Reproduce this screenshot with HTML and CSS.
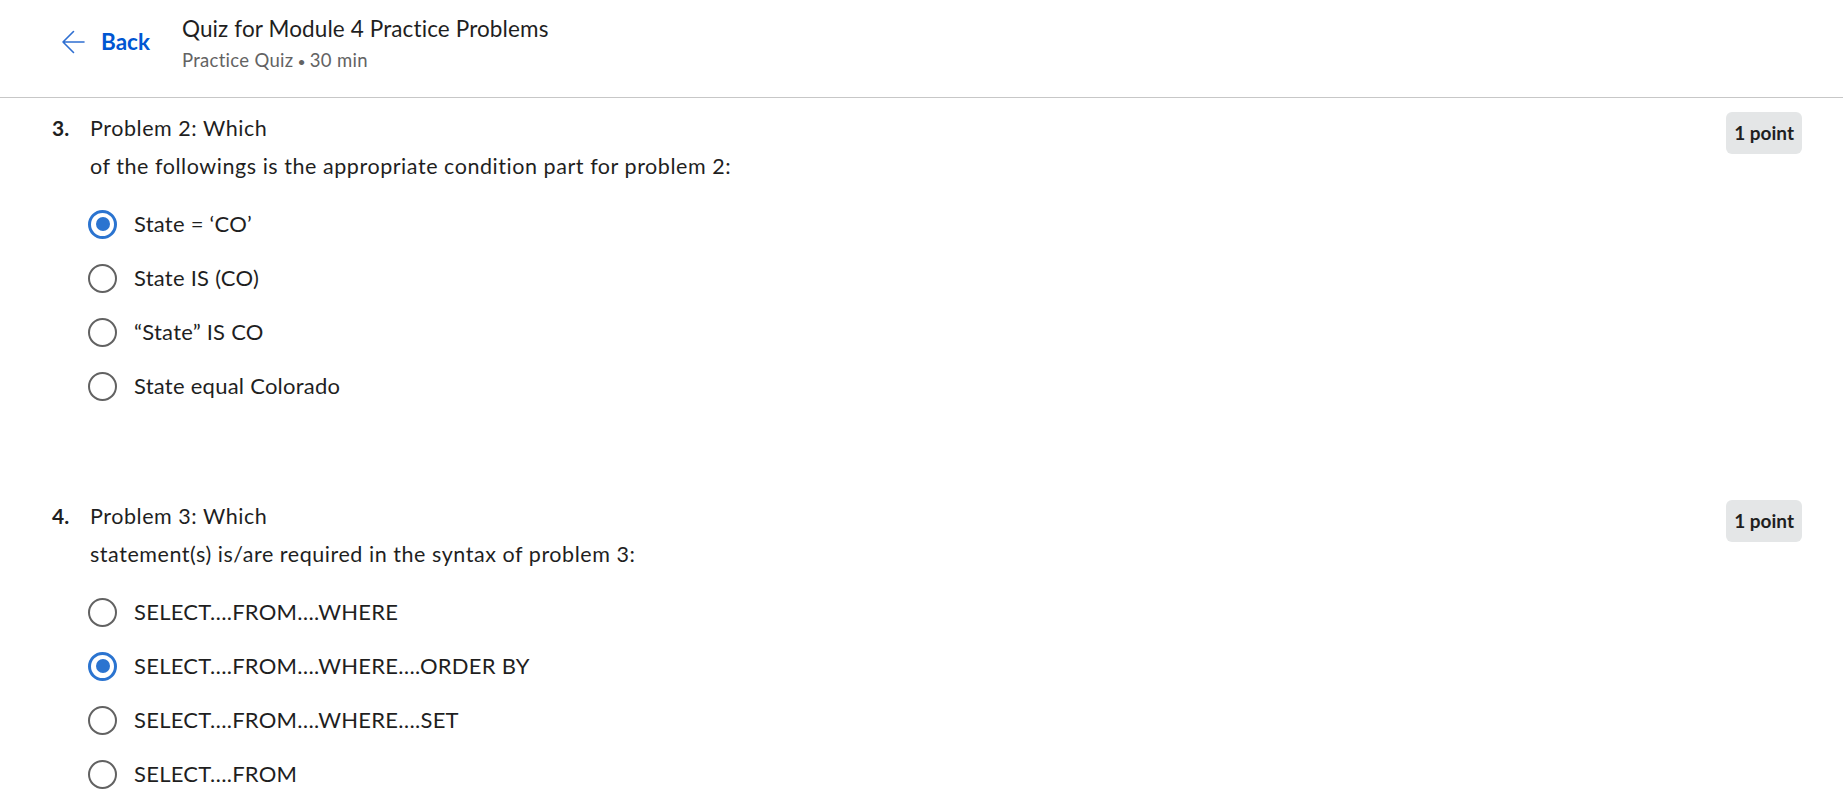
FILE: index.html
```html
<!DOCTYPE html>
<html lang="en">
<head>
<meta charset="utf-8">
<title>Quiz for Module 4 Practice Problems</title>
<link rel="stylesheet" href="styles.css">
</head>
<body>
<header class="topbar">
  <a class="back" href="#">
    <svg class="back-icon" viewBox="0 0 24 26" width="24" height="26" aria-hidden="true">
      <path d="M23 13H2M12.5 2.5L2 13l10.5 10.5" fill="none" stroke="#2f6fd1" stroke-width="1.6" stroke-linecap="round" stroke-linejoin="round"/>
    </svg>
    <span>Back</span>
  </a>
  <div class="titles">
    <div class="title">Quiz for Module 4 Practice Problems</div>
    <div class="subtitle">Practice Quiz<span class="dot">•</span>30 min</div>
  </div>
</header>

<main class="content">
  <section class="question">
    <div class="qnum">3.</div>
    <div class="qbody">
      <div class="prompt">
        <div class="line">Problem 2: Which</div>
        <div class="line">of the followings is the appropriate condition part for problem 2:</div>
      </div>
      <div class="options">
        <div class="option"><span class="radio checked"></span><span class="label">State = ‘CO’</span></div>
        <div class="option"><span class="radio"></span><span class="label">State IS (CO)</span></div>
        <div class="option"><span class="radio"></span><span class="label">“State” IS CO</span></div>
        <div class="option"><span class="radio"></span><span class="label">State equal Colorado</span></div>
      </div>
    </div>
    <div class="badge">1 point</div>
  </section>

  <section class="question">
    <div class="qnum">4.</div>
    <div class="qbody">
      <div class="prompt">
        <div class="line">Problem 3: Which</div>
        <div class="line">statement(s) is/are required in the syntax of problem 3:</div>
      </div>
      <div class="options">
        <div class="option"><span class="radio"></span><span class="label">SELECT….FROM….WHERE</span></div>
        <div class="option"><span class="radio checked"></span><span class="label">SELECT….FROM….WHERE….ORDER BY</span></div>
        <div class="option"><span class="radio"></span><span class="label">SELECT….FROM….WHERE….SET</span></div>
        <div class="option"><span class="radio"></span><span class="label">SELECT….FROM</span></div>
      </div>
    </div>
    <div class="badge">1 point</div>
  </section>
</main>
</body>
</html>
```

FILE: styles.css
```css
* { box-sizing: border-box; }

html, body {
  margin: 0;
  padding: 0;
  background: #ffffff;
}

body {
  font-family: "Lato", "Liberation Sans", sans-serif;
  color: #1f1f1f;
  overflow: hidden;
}

.topbar {
  display: flex;
  align-items: flex-start;
  height: 98px;
  border-bottom: 1px solid #c7c7c7;
  padding-left: 61px;
}

.back {
  display: flex;
  align-items: center;
  gap: 16px;
  margin-top: 29px;
  text-decoration: none;
  color: #0056d2;
  font-weight: 700;
  font-size: 22.5px;
  line-height: 26px;
}

.back-icon { display: block; }

.titles {
  margin-left: 32px;
  padding-top: 14px;
}

.title {
  font-size: 22.5px;
  line-height: 30px;
  letter-spacing: 0.12px;
  color: #1f1f1f;
}

.subtitle {
  margin-top: 2px;
  font-size: 18.5px;
  line-height: 28px;
  letter-spacing: 0.3px;
  color: #636363;
}

.subtitle .dot {
  margin: 0 4px;
  font-size: 14px;
}

.content {
  padding: 11px 41px 0 52px;
}

.question {
  display: flex;
  align-items: flex-start;
  margin-bottom: 84px;
}

.qnum {
  width: 38px;
  flex: none;
  font-weight: 700;
  font-size: 21px;
  line-height: 38px;
}

.qbody {
  flex: 1;
}

.prompt .line {
  font-size: 21.5px;
  line-height: 38px;
  letter-spacing: 0.55px;
}

.options {
  margin-top: 12px;
}

.option {
  display: flex;
  align-items: center;
  height: 54px;
  margin-left: -2px;
}

.radio {
  flex: none;
  width: 29px;
  height: 29px;
  border-radius: 50%;
  border: 2.5px solid #626262;
  display: flex;
  align-items: center;
  justify-content: center;
}

.radio.checked {
  border: 3px solid #2b74d0;
}

.radio.checked::after {
  content: "";
  width: 14px;
  height: 14px;
  border-radius: 50%;
  background: #2b74d0;
}

.label {
  margin-left: 17px;
  font-size: 22px;
  line-height: 28px;
  letter-spacing: 0.25px;
}

.badge {
  flex: none;
  margin-top: 3px;
  height: 42px;
  padding: 0 8px;
  line-height: 42px;
  border-radius: 6px;
  background: #e4e6e7;
  font-weight: 700;
  font-size: 19px;
  color: #1f1f1f;
}
```
